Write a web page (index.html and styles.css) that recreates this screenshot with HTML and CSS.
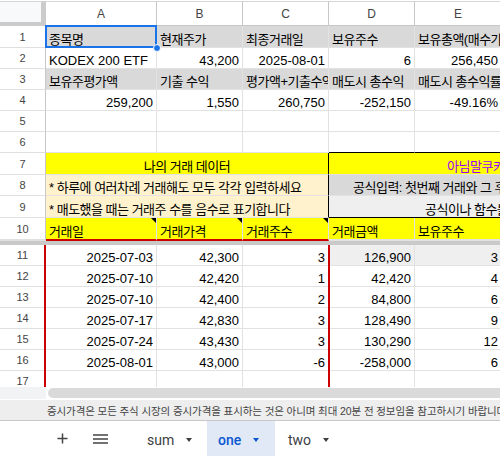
FILE: index.html
```html
<!DOCTYPE html>
<html lang="ko">
<head>
<meta charset="utf-8">
<title>one</title>
<link rel="stylesheet" href="styles.css">
</head>
<body>
<div class="app">
  <div class="sheet">
    <div class="row colhead">
      <div class="corner"></div>
      <div class="ch">A</div>
      <div class="ch">B</div>
      <div class="ch">C</div>
      <div class="ch">D</div>
      <div class="ch">E</div>
    </div>
    <div class="row h22">
      <div class="rh">1</div>
      <div class="c gray ko sel">종목명<span class="handle"></span></div>
      <div class="c gray ko">현재주가</div>
      <div class="c gray ko">최종거래일</div>
      <div class="c gray ko">보유주수</div>
      <div class="c gray ko">보유총액(매수가격)</div>
    </div>
    <div class="row">
      <div class="rh">2</div>
      <div class="c">KODEX 200 ETF</div>
      <div class="c r">43,200</div>
      <div class="c r">2025-08-01</div>
      <div class="c r">6</div>
      <div class="c r">256,450</div>
    </div>
    <div class="row">
      <div class="rh">3</div>
      <div class="c gray ko">보유주평가액</div>
      <div class="c gray ko">기출 수익</div>
      <div class="c gray ko">평가액+기출수익</div>
      <div class="c gray ko">매도시 총수익</div>
      <div class="c gray ko">매도시 총수익률</div>
    </div>
    <div class="row">
      <div class="rh">4</div>
      <div class="c r">259,200</div>
      <div class="c r">1,550</div>
      <div class="c r">260,750</div>
      <div class="c r">-252,150</div>
      <div class="c r">-49.16%</div>
    </div>
    <div class="row">
      <div class="rh">5</div>
      <div class="c"></div><div class="c"></div><div class="c"></div><div class="c"></div><div class="c"></div>
    </div>
    <div class="row">
      <div class="rh">6</div>
      <div class="c"></div><div class="c"></div><div class="c"></div><div class="c bb-black"></div><div class="c bb-black"></div>
    </div>
    <div class="row h22">
      <div class="rh">7</div>
      <div class="c m3 yellow ko ctr br-black">나의 거래 데이터</div>
      <div class="c m2 yellow ko purple pad-title">아님말쿠키 데이터</div>
    </div>
    <div class="row">
      <div class="rh">8</div>
      <div class="c m3 cream ko br-black">* 하루에 여러차례 거래해도 모두 각각 입력하세요</div>
      <div class="c m2 gray ko pad-f1">공식입력: 첫번째 거래와 그 후 거래는 다릅니다</div>
    </div>
    <div class="row h22">
      <div class="rh">9</div>
      <div class="c m3 cream ko br-black">* 매도했을 때는 거래주 수를 음수로 표기합니다</div>
      <div class="c m2 light ko pad-f2 bb-black">공식이나 함수를 수정하지 마세요</div>
    </div>
    <div class="row h23 r10">
      <div class="rh">10</div>
      <div class="c yellow ko note red-b">거래일</div>
      <div class="c yellow ko note red-b">거래가격</div>
      <div class="c yellow ko note red-b">거래주수</div>
      <div class="c yellow ko">거래금액</div>
      <div class="c yellow ko">보유주수</div>
    </div>
    <div class="freeze"></div>
    <div class="body">
      <div class="row">
        <div class="rh">11</div>
        <div class="c r">2025-07-03</div>
        <div class="c r">42,300</div>
        <div class="c r">3</div>
        <div class="c r light">126,900</div>
        <div class="c r light">3</div>
      </div>
      <div class="row">
        <div class="rh">12</div>
        <div class="c r">2025-07-10</div>
        <div class="c r">42,420</div>
        <div class="c r">1</div>
        <div class="c r">42,420</div>
        <div class="c r">4</div>
      </div>
      <div class="row">
        <div class="rh">13</div>
        <div class="c r">2025-07-10</div>
        <div class="c r">42,400</div>
        <div class="c r">2</div>
        <div class="c r">84,800</div>
        <div class="c r">6</div>
      </div>
      <div class="row">
        <div class="rh">14</div>
        <div class="c r">2025-07-17</div>
        <div class="c r">42,830</div>
        <div class="c r">3</div>
        <div class="c r">128,490</div>
        <div class="c r">9</div>
      </div>
      <div class="row">
        <div class="rh">15</div>
        <div class="c r">2025-07-24</div>
        <div class="c r">43,430</div>
        <div class="c r">3</div>
        <div class="c r">130,290</div>
        <div class="c r">12</div>
      </div>
      <div class="row">
        <div class="rh">16</div>
        <div class="c r">2025-08-01</div>
        <div class="c r">43,000</div>
        <div class="c r">-6</div>
        <div class="c r">-258,000</div>
        <div class="c r">6</div>
      </div>
      <div class="row">
        <div class="rh">17</div>
        <div class="c"></div><div class="c"></div><div class="c"></div><div class="c"></div><div class="c"></div>
      </div>
      <div class="redbox"></div>
    </div>
  </div>
  <div class="hscroll">
    <div class="hs-left"></div>
    <div class="hs-track"><div class="hs-thumb"></div></div>
  </div>
  <div class="notice">증시가격은 모든 주식 시장의 증시가격을 표시하는 것은 아니며 최대 20분 전 정보임을 참고하시기 바랍니다</div>
  <div class="tabs">
    <svg class="ic-plus" width="11" height="11" viewBox="0 0 11 11"><path d="M5.5 0.5v10M0.5 5.5h10" stroke="#444" stroke-width="1.5" fill="none"/></svg>
    <svg class="ic-menu" width="15" height="10" viewBox="0 0 15 10"><path d="M0 1h15M0 5h15M0 9h15" stroke="#444" stroke-width="1.5" fill="none"/></svg>
    <div class="tab t-sum">sum<span class="arr"></span></div>
    <div class="tab active">one<span class="arr"></span></div>
    <div class="tab t-two">two<span class="arr"></span></div>
  </div>
</div>
</body>
</html>
```
FILE: styles.css
```css
* { box-sizing: border-box; margin: 0; padding: 0; }
html, body { width: 500px; height: 456px; overflow: hidden; background: #fff; }
body { font-family: "Liberation Sans", "Noto Sans CJK KR", sans-serif; color: #000; }

.app { display: flex; flex-direction: column; width: 500px; height: 456px; }
.sheet { height: 387px; flex: none; overflow: hidden; }

.row { display: grid; grid-template-columns: 46px 111px 86px 86px 86px 87px; height: 21px; }
.h22 { height: 22px; }
.h23 { height: 23px; }

.colhead { height: 26px; padding-top: 1px; }
.corner { background: #f8f9fa; border-top: 1px solid #d6d6d6; border-right: 5px solid #cbcbcb; border-bottom: 4px solid #cbcbcb; }
.ch { border-top: 1px solid #d6d6d6; border-right: 1px solid #c7c7c7; border-bottom: 1px solid #c7c7c7; display: flex; align-items: center; justify-content: center; font-size: 12px; color: #444; }

.rh { border-right: 1px solid #c7c7c7; border-bottom: 1px solid #e0e0e0; display: flex; align-items: center; justify-content: center; font-size: 11px; color: #444; }

.c { border-right: 1px solid #e2e2e3; border-bottom: 1px solid #e2e2e3; padding: 0 3px; display: flex; align-items: flex-end; white-space: nowrap; overflow: hidden; font-size: 13px; line-height: 15px; }
.r { justify-content: flex-end; }
.ctr { justify-content: center; }
.ko { letter-spacing: -0.5px; }
.m3 { grid-column: span 3; }
.m2 { grid-column: span 2; border-right: none; }

.gray { background: #d9d9d9; }
.light { background: #efefef; }
.yellow { background: #ffff00; }
.cream { background: #fff2cc; }
.purple { color: #9900ff; }

.br-black { border-right-color: #000; }
.bb-black { border-bottom-color: #000; }

.pad-title { padding-left: 118px; }
.pad-f1 { padding-left: 24px; }
.pad-f2 { padding-left: 96px; }

.r10 .c, .r10 .rh { border-bottom-width: 2px; }
.red-b { border-bottom-color: #cc0000 !important; }

.sel { position: relative; overflow: visible; }
.sel::after { content: ""; position: absolute; top: -1px; left: -1px; right: -1px; bottom: -1px; border: 2px solid #1a73e8; pointer-events: none; }
.handle { position: absolute; right: -5px; bottom: -5px; width: 8px; height: 8px; border-radius: 50%; background: #1a73e8; border: 1px solid #fff; z-index: 2; }

.note { position: relative; }
.note::before { content: ""; position: absolute; top: 0; right: 0; border-top: 5px solid #000; border-left: 5px solid transparent; }

.freeze { height: 4px; background: #c9c9c9; }

.body { position: relative; }
.redbox { position: absolute; left: 44px; top: 0; width: 286px; height: 100%; border-left: 2px solid #cc0000; border-right: 2px solid #cc0000; pointer-events: none; }

.hscroll { height: 12px; flex: none; display: flex; background: #fff; }
.hs-left { width: 46px; background: #f1f3f4; }
.hs-track { flex: 1; padding: 1px 0 1px 2px; }
.hs-thumb { height: 10px; border-radius: 5px 0 0 5px; background: #dadada; }

.notice { height: 22px; flex: none; border-top: 1px solid #fff; border-bottom: 1px solid #c8c8c8; background: #eeeeee; color: #444; font-size: 10.5px; letter-spacing: -0.1px; white-space: nowrap; overflow: hidden; display: flex; align-items: center; padding-left: 47px; }

.tabs { flex: 1; display: flex; align-items: stretch; background: #fff; font-family: Roboto, "Liberation Sans", sans-serif; font-size: 14px; color: #3c4043; }
.ic-plus { align-self: center; margin-left: 57px; }
.ic-menu { align-self: center; margin-left: 25px; }
.tab { display: flex; align-items: center; padding-top: 3px; line-height: 16px; }
.t-sum { margin-left: 28px; width: 71px; padding-left: 11px; }
.active { width: 68px; padding-left: 11px; background: #e1e9f7; color: #0b57d0; font-weight: 500; }
.t-two { padding-left: 13px; }
.arr { width: 0; height: 0; margin-left: 12px; margin-top: -1px; border-top: 4px solid #3c4043; border-left: 3.5px solid transparent; border-right: 3.5px solid transparent; }
.active .arr { border-top-color: #0b57d0; }
```
